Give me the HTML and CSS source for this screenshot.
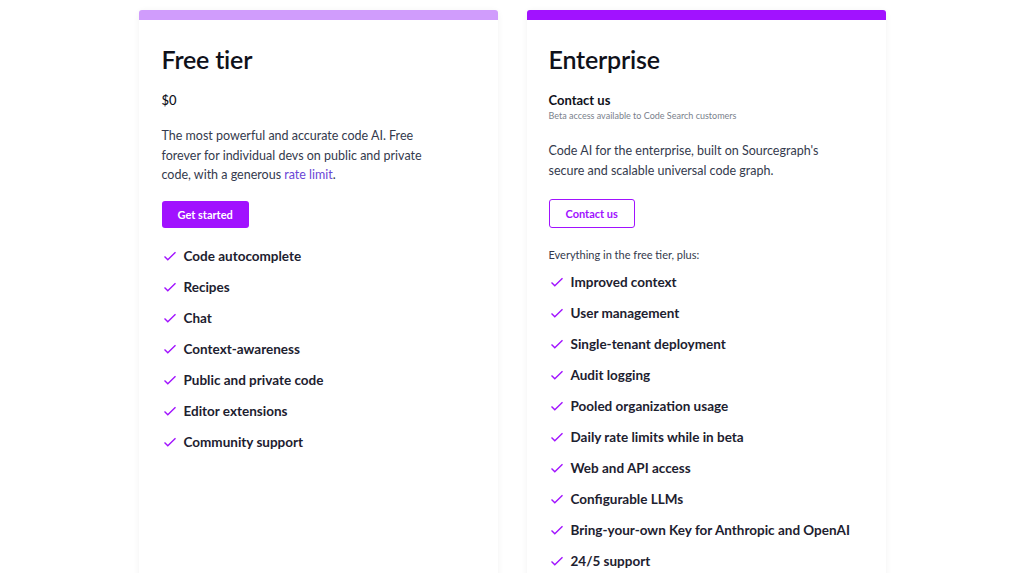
FILE: index.html
```html
<!DOCTYPE html>
<html lang="en">
<head>
    <meta charset="UTF-8" />
    <title>Cody Pricing</title>
    <link rel="stylesheet" href="styles.css">
</head>
<body>
<div class="plans">
    <div class="plan free">
        <div class="plan-bar"></div>
        <div class="plan-body">
            <h2>Free tier</h2>
            <div class="price">$0</div>
            <p class="desc">The most powerful and accurate code AI. Free forever for individual devs on public and private code, with a generous <a href="#">rate limit</a>.</p>
            <a class="btn btn-solid" href="#">Get started</a>
            <ul class="features">
                <li><svg viewBox="0 0 14 14"><path d="M1.5 7.5l3.3 3.3L12.5 3.2"/></svg>Code autocomplete</li>
                <li><svg viewBox="0 0 14 14"><path d="M1.5 7.5l3.3 3.3L12.5 3.2"/></svg>Recipes</li>
                <li><svg viewBox="0 0 14 14"><path d="M1.5 7.5l3.3 3.3L12.5 3.2"/></svg>Chat</li>
                <li><svg viewBox="0 0 14 14"><path d="M1.5 7.5l3.3 3.3L12.5 3.2"/></svg>Context-awareness</li>
                <li><svg viewBox="0 0 14 14"><path d="M1.5 7.5l3.3 3.3L12.5 3.2"/></svg>Public and private code</li>
                <li><svg viewBox="0 0 14 14"><path d="M1.5 7.5l3.3 3.3L12.5 3.2"/></svg>Editor extensions</li>
                <li><svg viewBox="0 0 14 14"><path d="M1.5 7.5l3.3 3.3L12.5 3.2"/></svg>Community support</li>
            </ul>
        </div>
    </div>
    <div class="plan enterprise">
        <div class="plan-bar"></div>
        <div class="plan-body">
            <h2>Enterprise</h2>
            <div class="price-title">Contact us</div>
            <div class="price-note">Beta access available to Code Search customers</div>
            <p class="desc">Code AI for the enterprise, built on Sourcegraph's secure and scalable universal code graph.</p>
            <a class="btn btn-outline" href="#">Contact us</a>
            <div class="plus">Everything in the free tier, plus:</div>
            <ul class="features">
                <li><svg viewBox="0 0 14 14"><path d="M1.5 7.5l3.3 3.3L12.5 3.2"/></svg>Improved context</li>
                <li><svg viewBox="0 0 14 14"><path d="M1.5 7.5l3.3 3.3L12.5 3.2"/></svg>User management</li>
                <li><svg viewBox="0 0 14 14"><path d="M1.5 7.5l3.3 3.3L12.5 3.2"/></svg>Single-tenant deployment</li>
                <li><svg viewBox="0 0 14 14"><path d="M1.5 7.5l3.3 3.3L12.5 3.2"/></svg>Audit logging</li>
                <li><svg viewBox="0 0 14 14"><path d="M1.5 7.5l3.3 3.3L12.5 3.2"/></svg>Pooled organization usage</li>
                <li><svg viewBox="0 0 14 14"><path d="M1.5 7.5l3.3 3.3L12.5 3.2"/></svg>Daily rate limits while in beta</li>
                <li><svg viewBox="0 0 14 14"><path d="M1.5 7.5l3.3 3.3L12.5 3.2"/></svg>Web and API access</li>
                <li><svg viewBox="0 0 14 14"><path d="M1.5 7.5l3.3 3.3L12.5 3.2"/></svg>Configurable LLMs</li>
                <li><svg viewBox="0 0 14 14"><path d="M1.5 7.5l3.3 3.3L12.5 3.2"/></svg>Bring-your-own Key for Anthropic and OpenAI</li>
                <li><svg viewBox="0 0 14 14"><path d="M1.5 7.5l3.3 3.3L12.5 3.2"/></svg>24/5 support</li>
            </ul>
        </div>
    </div>
</div>
</body>
</html>
```

FILE: styles.css
```css
body {
    margin: 0;
    background: #fff;
    font-family: Lato, "Noto Sans", sans-serif;
    color: #0f111a;
    overflow: hidden;
}
.plans {
    display: flex;
    justify-content: center;
    gap: 29px;
    padding-top: 10px;
}
.plan {
    width: 359px;
    height: 620px;
    background: #fff;
    border-radius: 4px 4px 0 0;
    box-shadow: 0 1px 6px rgba(0, 0, 0, 0.06);
}
.plan-bar {
    height: 10px;
    border-radius: 3px 3px 0 0;
}
.free .plan-bar {
    background: #d09cfc;
}
.enterprise .plan-bar {
    background: #a112ff;
}
.plan-body {
    padding: 23px 23px 0;
}
.enterprise .plan-body {
    padding-left: 22px;
}
h2 {
    margin: 0;
    font-size: 25px;
    font-weight: 600;
    line-height: 32px;
    letter-spacing: -0.2px;
}
.price {
    margin-top: 17px;
    font-size: 13px;
    font-weight: 500;
    line-height: 16px;
}
.price-title {
    margin-top: 17px;
    font-size: 13px;
    font-weight: 700;
    line-height: 16px;
}
.price-note {
    margin-top: 1px;
    font-size: 9px;
    color: #7a7f8c;
    line-height: 14px;
}
.desc {
    margin: 18px 0 0;
    width: 270px;
    font-size: 12.5px;
    line-height: 19.5px;
    color: #343a4d;
}
.enterprise .desc {
    width: 290px;
    margin-top: 18px;
}
.desc a {
    color: #6b47d6;
    text-decoration: none;
}
.btn {
    display: inline-block;
    margin-top: 16px;
    height: 27px;
    line-height: 27px;
    padding: 0 16px;
    border-radius: 3px;
    font-size: 11px;
    font-weight: 700;
    text-decoration: none;
    box-sizing: border-box;
}
.btn-solid {
    background: #a112ff;
    color: #fff;
}
.btn-outline {
    height: 29px;
    border: 1px solid #a112ff;
    color: #a112ff;
    padding: 0 16px;
    margin-top: 19px;
}
.plus {
    margin-top: 19px;
    font-size: 11px;
    color: #343a4d;
    line-height: 16px;
}
.features {
    list-style: none;
    margin: 13px 0 0;
    padding: 0;
}
.enterprise .features {
    margin-top: 3px;
}
.features li {
    display: flex;
    align-items: center;
    height: 31px;
    font-size: 13.5px;
    font-weight: 700;
    color: #1d212f;
}
.features svg {
    width: 14px;
    height: 14px;
    margin: 0 7px 0 1px;
    fill: none;
    stroke: #a112ff;
    stroke-width: 1.4;
}
```
